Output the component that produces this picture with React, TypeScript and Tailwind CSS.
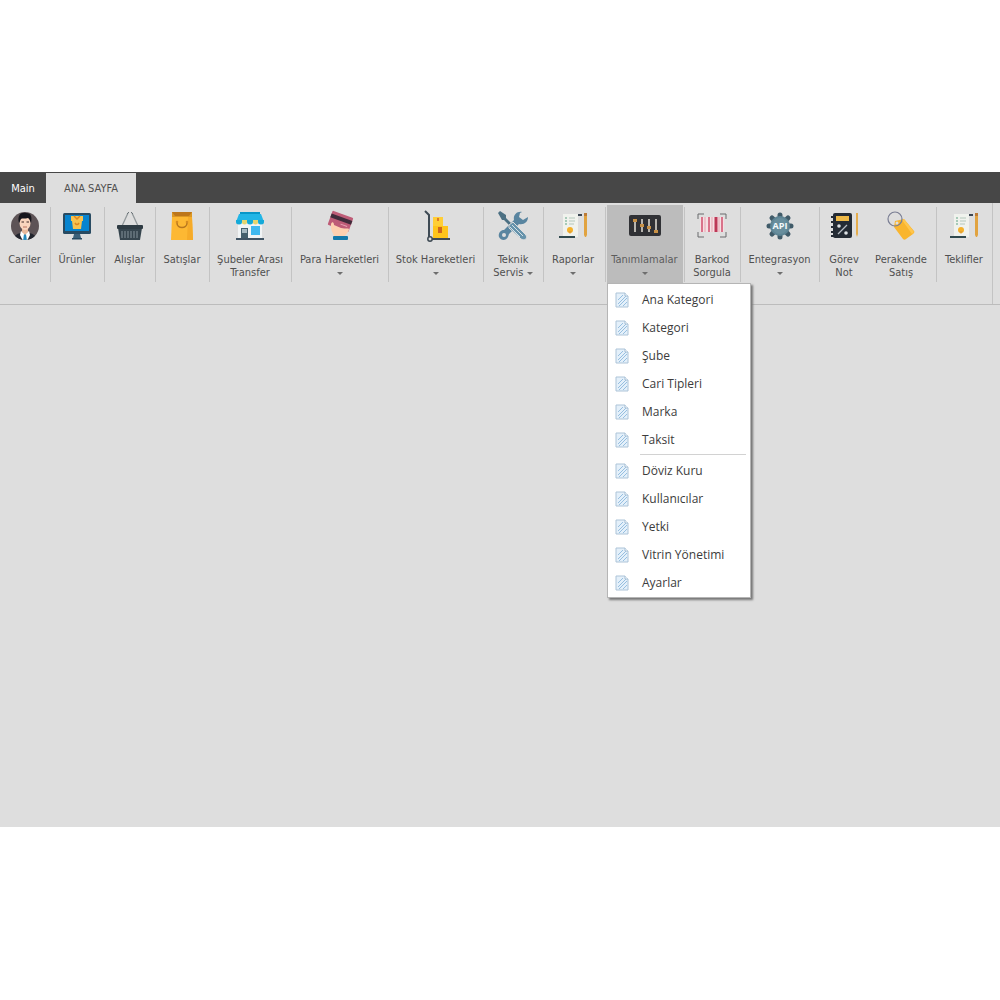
import React from 'react';
import clsx from 'clsx';

type IconProps = { className?: string };

const CustomerIcon = ({ className }: IconProps) => (
  <svg viewBox="0 0 32 32" className={className}>
    <clipPath id="avatar"><circle cx="16" cy="16" r="14" /></clipPath>
    <circle cx="16" cy="16" r="14" fill="#5d5356" />
    <g clipPath="url(#avatar)">
      <path d="M4 32q0-8 8-9l4 2 4-2q8 1 8 9z" fill="#22252e" />
      <path d="M12 21l4 3 4-3 1 4-3 6h-4l-3-6z" fill="#fff" />
      <path d="M15 24h2l1 7h-4z" fill="#2589bd" />
      <path d="M13 18h6v4l-3 3-3-3z" fill="#e9b99b" />
      <ellipse cx="16" cy="13" rx="5.5" ry="7" fill="#f9d5bd" />
      <path d="M10 13C8 5 12 2 17 3c6 0 6 5 5 10-1-2-1-4-3-5-3 1-6 0-7 1-1 1-1 3-2 4z" fill="#16161c" />
      <path d="M12.500 12h2.500M17.500 12H20" stroke="#3c2926" strokeWidth="1" />
      <path d="M14 17h4" stroke="#ba725f" strokeWidth="1" />
    </g>
  </svg>
);

const ProductIcon = ({ className }: IconProps) => (
  <svg viewBox="0 0 32 32" className={className}>
    <rect x="2" y="3" width="28" height="21" rx="1.500" fill="#294b62" />
    <rect x="4" y="5" width="24" height="16" fill="#0784cf" />
    <path d="M13 24h6l1 4h-8z" fill="#3c617a" />
    <path d="M11 28h10v1.500H11z" fill="#294b62" />
    <path d="M10 6h12v5h-1l-1 8h-8l-1-8h-1z" fill="#f8c24e" />
    <path d="M13 6l3 3 3-3M14 13q2 3 4 0" fill="none" stroke="#df871e" strokeWidth="1.500" />
  </svg>
);

const BasketIcon = ({ className }: IconProps) => (
  <svg viewBox="0 0 32 32" className={className}>
    <path d="M8 16L14 3M24 16L18 3" stroke="#92989b" strokeWidth="1.300" fill="none" />
    <path d="M13 4l2-2M19 4l-2-2" stroke="#6b7478" strokeWidth="1" />
    <path d="M4 18h24l-2 12H6z" fill="#36454e" />
    <rect x="3" y="15" width="26" height="4" rx="1" fill="#2e3b43" />
    <path d="M8 21v7M11 21v7M14 21v7M17 21v7M20 21v7M23 21v7" stroke="#84939a" strokeWidth="1" />
  </svg>
);

const BagIcon = ({ className }: IconProps) => (
  <svg viewBox="0 0 32 32" className={className}>
    <path d="M6 2h20v6H6z" fill="#bd761b" />
    <path d="M6 2l3 4h14l3-4v5H6z" fill="#dc9723" />
    <path d="M6 7h20l1 23H5z" fill="#fdb833" />
    <path d="M22 7h4l1 23h-6z" fill="#f6ab29" />
    <path d="M11 12v1c0 6 10 6 10 0v-1" fill="none" stroke="#b7771f" strokeWidth="1.500" />
    <circle cx="11" cy="12" r="1.300" fill="#d58b21" />
    <circle cx="21" cy="12" r="1.300" fill="#d58b21" />
  </svg>
);

const StoreIcon = ({ className }: IconProps) => (
  <svg viewBox="0 0 32 32" className={className}>
    <path d="M4 11h24v18H4z" fill="#f1f4f5" />
    <path d="M6 2h20v3H6z" fill="#0796c8" />
    <path d="M5 4h22l3 8H2z" fill="#21b5e6" />
    <path d="M2 10h6v2a3 2.500 0 0 1-6 0zM13 10h6v2a3 2.500 0 0 1-6 0zM24 10h6v2a3 2.500 0 0 1-6 0z" fill="#14aad9" />
    <path d="M8 10h5v2a2.500 2.500 0 0 1-5 0zM19 10h5v2a2.500 2.500 0 0 1-5 0z" fill="#e4d56f" />
    <path d="M7 18h7v11H7z" fill="#45606d" />
    <path d="M8 19h5v4H8z" fill="#a7bac2" />
    <path d="M17 16h9v9h-9z" fill="#3fb9f0" />
    <path d="M2 28h28v2H2z" fill="#415565" />
  </svg>
);

const CardIcon = ({ className }: IconProps) => (
  <svg viewBox="0 0 32 32" className={className}>
    <g transform="rotate(20 17 10)">
      <rect x="6" y="4" width="22" height="15" rx="1" fill="#be5c77" />
      <path d="M6 7h22v4H6z" fill="#402c3b" />
      <path d="M18 14h7" stroke="#e9a5b6" strokeWidth="1" />
    </g>
    <path d="M7 14c1-3 3-2 3 1l7 3c5 1 7 0 8 1 0 3-4 6-5 8H10c0-4-4-6-3-13z" fill="#fed0b0" />
    <rect x="9" y="26" width="15" height="4" rx="1" fill="#1579aa" />
  </svg>
);

const TrolleyIcon = ({ className }: IconProps) => (
  <svg viewBox="0 0 32 32" className={className}>
    <path d="M13 7h10v9H13z" fill="#ffce36" />
    <path d="M13 16h15v12H13z" fill="#fec41b" />
    <path d="M17 8h2v3h-2z" fill="#df7b25" />
    <path d="M18 17h4v6h-4z" fill="#cf671c" />
    <path d="M5 1l4 4v22M12 29h18" fill="none" stroke="#3e4a54" strokeWidth="2" />
    <circle cx="10" cy="29" r="2.200" fill="#dedede" stroke="#3e4a54" strokeWidth="1.500" />
  </svg>
);

const ToolsIcon = ({ className }: IconProps) => (
  <svg viewBox="0 0 32 32" className={className}>
    <path d="M1 3l2-2 6 4v3l10 10-2 2L7 10H5z" fill="#4c7083" />
    <path d="M25 2c-5-1-9 3-8 8L7 20c-4 0-6 4-5 7 2 4 7 4 9 0l1-3 10-10c5 1 9-2 9-7l-5 3-4-3 1-4z" fill="#5985a0" />
    <circle cx="7" cy="25" r="2" fill="#dedede" />
    <path d="M12 15l4-3 13 13c2 4-2 6-5 4L12 18z" fill="#6793ab" stroke="#dedede" strokeWidth="1" />
    <path d="M15 15l11 11M13 17l10 10" stroke="#d4e1e7" strokeWidth="1" />
  </svg>
);

const ReportIcon = ({ className }: IconProps) => (
  <svg viewBox="0 0 32 32" className={className}>
    <path d="M6 4h15v22H6z" fill="#f0f2ed" />
    <path d="M8 8h2M8 11h2M8 14h2" stroke="#5ea183" strokeWidth="1.200" />
    <path d="M12 8h6M12 11h6M12 14h5" stroke="#b4c8bc" strokeWidth="1" />
    <path d="M2 26h16v2H2z" fill="#30494e" />
    <path d="M18 24h3v3h-3z" fill="#edf0eb" />
    <circle cx="13" cy="20" r="3" fill="#f5b12a" />
    <path d="M11 21l2 3 2-3z" fill="#e5a231" />
    <path d="M21 4h4v2h-4z" fill="#3c4754" />
    <path d="M27 3h3v22l-1 2h-1l-1-2z" fill="#e1a340" />
    <path d="M27 3h3v3h-3z" fill="#bc7b36" />
  </svg>
);

const SlidersIcon = ({ className }: IconProps) => (
  <svg viewBox="0 0 32 32" className={className}>
    <rect y="5" width="32" height="21" rx="2" fill="#303135" />
    <path d="M6 9v13M13 9v13M20 9v13M27 9v13" stroke="#e5e1d8" strokeWidth="1.500" />
    <path d="M4 9h4v3H4zM11 14h4v3h-4zM18 16h4v3h-4zM25 20h4v3h-4z" fill="#c89146" />
  </svg>
);

const BarcodeIcon = ({ className }: IconProps) => (
  <svg viewBox="0 0 32 32" className={className}>
    <path d="M4 7h24v15H4z" fill="#f4dfe2" />
    <path d="M6 7v15M13 7v15M26 7v15" stroke="#d9728a" strokeWidth="2" />
    <path d="M9 7v15M16 7v15M23 7v15" stroke="#e5a3b1" strokeWidth="1" />
    <path d="M20 7v15" stroke="#bd3756" strokeWidth="3" />
    <path d="M2 9V4h6M24 4h6v5M30 22v5h-6M8 27H2v-5" fill="none" stroke="#696b6c" strokeWidth="1" />
  </svg>
);

const ApiIcon = ({ className }: IconProps) => (
  <svg viewBox="0 0 32 32" className={className}>
    <path d="M16 5v22M5 16h22M8 8l16 16M24 8L8 24" stroke="#405b69" strokeWidth="5" strokeLinecap="round" />
    <circle cx="16" cy="16" r="10" fill="#5d8494" />
    <circle cx="16" cy="16" r="8" fill="#688e9d" />
    <text x="16" y="19" textAnchor="middle" fontSize="9" fontWeight="700" fill="#f4fafc" fontFamily="Open Sans, sans-serif">API</text>
  </svg>
);

const NoteIcon = ({ className }: IconProps) => (
  <svg viewBox="0 0 32 32" className={className}>
    <rect x="5" y="3" width="19" height="25" rx="2" fill="#242b34" />
    <path d="M3 7h3M3 12h3M3 17h3M3 22h3M3 26h3" stroke="#242b34" strokeWidth="2" />
    <path d="M8 6h13v5H8z" fill="#eeb947" />
    <path d="M10 24l9-9" stroke="#b7bdc3" strokeWidth="1.300" />
    <circle cx="11" cy="16" r="1.800" fill="#dde1e4" />
    <circle cx="18" cy="23" r="1.800" fill="#dde1e4" />
    <path d="M28 3h2v21l-1 3-1-3z" fill="#e5ad4d" />
  </svg>
);

const TagIcon = ({ className }: IconProps) => (
  <svg viewBox="0 0 32 32" className={className}>
    <path d="M10 11l9-2 10 12c1 1 0 2-1 3l-7 5c-1 1-2 1-3 0L9 17z" fill="#f9b52e" />
    <path d="M19 9l10 13-2 2L17 10z" fill="#ffc64d" />
    <circle cx="12" cy="13" r="1.500" fill="#dedede" />
    <circle cx="10" cy="9" r="7" fill="none" stroke="#797d93" strokeWidth="1.200" />
  </svg>
);

const MenuItemIcon = () => (
  <svg viewBox="0 0 14 16" className="h-4 w-3.5 shrink-0">
    <path d="M1 1h9l3 3v11H1z" fill="#e4f0fa" stroke="#adc4d8" strokeWidth="1" />
    <path d="M3 8l5-5M3 12l8-8M4 14l8-8M8 14l4-4" stroke="#97bfe0" strokeWidth="1" />
    <path d="M10 1v3h3" fill="#fff" stroke="#a3bdd3" strokeWidth="1" />
  </svg>
);

const Arrow = () => (
  <span className="inline-block border-x-3 border-t-3 border-x-transparent border-t-[#6e6e6e] align-middle" />
);

interface RibbonItem {
  lines: string[];
  icon: React.FC<IconProps>;
  width: string;
  arrow?: 'below' | 'inline';
  active?: boolean;
}

const groups: RibbonItem[][] = [
  [{ lines: ['Cariler'], icon: CustomerIcon, width: 'w-[50px]' }],
  [{ lines: ['Ürünler'], icon: ProductIcon, width: 'w-[53px]' }],
  [{ lines: ['Alışlar'], icon: BasketIcon, width: 'w-[50px]' }],
  [{ lines: ['Satışlar'], icon: BagIcon, width: 'w-[53px]' }],
  [{ lines: ['Şubeler Arası', 'Transfer'], icon: StoreIcon, width: 'w-[81px]' }],
  [{ lines: ['Para Hareketleri'], icon: CardIcon, width: 'w-[96px]', arrow: 'below' }],
  [{ lines: ['Stok Hareketleri'], icon: TrolleyIcon, width: 'w-[94px]', arrow: 'below' }],
  [{ lines: ['Teknik', 'Servis'], icon: ToolsIcon, width: 'w-[59px]', arrow: 'inline' }],
  [{ lines: ['Raporlar'], icon: ReportIcon, width: 'w-[61px] pr-0.5', arrow: 'below' }],
  [{ lines: ['Tanımlamalar'], icon: SlidersIcon, width: 'w-[78px] px-px', arrow: 'below', active: true }],
  [{ lines: ['Barkod', 'Sorgula'], icon: BarcodeIcon, width: 'w-[55px]' }],
  [{ lines: ['Entegrasyon'], icon: ApiIcon, width: 'w-[78px]', arrow: 'below' }],
  [
    { lines: ['Görev', 'Not'], icon: NoteIcon, width: 'w-[49px]' },
    { lines: ['Perakende', 'Satış'], icon: TagIcon, width: 'w-[67px] pr-0.5' },
  ],
  [{ lines: ['Teklifler'], icon: ReportIcon, width: 'w-[55px]' }],
];

const menuSections = [
  ['Ana Kategori', 'Kategori', 'Şube', 'Cari Tipleri', 'Marka', 'Taksit'],
  ['Döviz Kuru', 'Kullanıcılar', 'Yetki', 'Vitrin Yönetimi', 'Ayarlar'],
];

const DropdownMenu = () => (
  <div
    role="menu"
    className="absolute top-full left-0 z-10 w-36 border border-[#b5b5b5] bg-white pt-0.5 font-['Open_Sans',sans-serif] text-xs text-[#3c3c3c] shadow-[2px_2px_2px_#777777]"
  >
    {menuSections.map((section, i) => (
      <div key={i}>
        {i > 0 && <div className="mr-1 ml-8 h-[3px] border-t border-[#d2d2d2]" />}
        {section.map((label) => (
          <button key={label} role="menuitem" className="flex h-7 w-full items-center gap-[13px] pl-[7px] text-left hover:bg-[#e5e5e5]">
            <MenuItemIcon />
            <span>{label}</span>
          </button>
        ))}
      </div>
    ))}
  </div>
);

const RibbonButton = ({ item }: { item: RibbonItem }) => {
  const Icon = item.icon;
  return (
    <div className={clsx('h-[78px] shrink-0', item.width)}>
      <div className="relative h-full">
        <button
          aria-expanded={item.active}
          className={clsx(
            'flex h-full w-full flex-col items-center pt-[5px] pr-px leading-[13px] whitespace-nowrap',
            item.active ? 'bg-[#bcbcbc] text-[#5c5c5c]' : 'hover:bg-[#d0d0d0]',
          )}
        >
          <Icon className="mb-[11px] h-8 w-8 shrink-0" />
          {item.lines.map((line, i) => (
            <span key={line}>
              {line}
              {item.arrow === 'inline' && i === item.lines.length - 1 && <> <Arrow /></>}
            </span>
          ))}
          {item.arrow === 'below' && <span><Arrow /></span>}
        </button>
        {item.active && <DropdownMenu />}
      </div>
    </div>
  );
};

export default function App() {
  return (
    <div className="min-h-screen bg-white py-43 font-['DejaVu_Sans_Condensed','Noto_Sans',sans-serif] text-[11px] text-[#505050]">
      <div className="flex min-h-[655px] flex-col bg-[#dedede]">
        <nav className="flex h-[31px] shrink-0 bg-[#474747]">
          <button className="w-[46px] pt-[3px] text-white">Main</button>
          <button className="mt-px w-[90px] bg-[#dedede] pt-0.5">ANA SAYFA</button>
        </nav>

        <div className="flex h-[102px] shrink-0 border-b border-[#bcbcbc]">
          <div className="flex border-r border-[#c3c3c3] pt-0.5">
            {groups.map((group, i) => (
              <div key={i} className="flex">
                {group.map((item) => (
                  <RibbonButton key={item.lines[0]} item={item} />
                ))}
                {i < groups.length - 1 && <div className="mt-0.5 h-[75px] w-px bg-[#c3c3c3]" />}
              </div>
            ))}
          </div>
        </div>

        <main className="grow" />
      </div>
    </div>
  );
}
